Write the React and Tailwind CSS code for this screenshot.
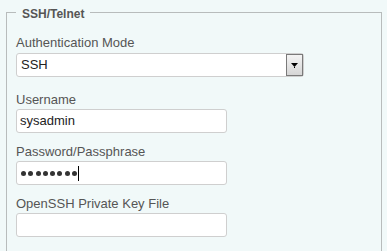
import { useState } from "react";

function Label({ children }) {
  return <div className="h-[16px] leading-[16px] text-[13px] text-[#555]">{children}</div>;
}

function TextBox({ children }) {
  return (
    <div className="mt-[1px] flex h-[24px] w-[211px] items-center rounded-[3px] border border-[#cfcfcf] bg-white pl-[3px] text-[13px] text-[#222]">
      {children}
    </div>
  );
}

export default function App() {
  const [mode] = useState("SSH");
  const dots = Array.from({ length: 8 });

  return (
    <div className="h-[251px] w-full overflow-hidden bg-[#f1f9f9] pt-[3px]" style={{ fontFamily: '"Liberation Sans", Arial, sans-serif' }}>
      <fieldset className="ml-[6px] h-[300px] w-[376px] border border-[#b8bcbc] pl-[9px] pt-[13px]">
        <legend className="px-[6px] pt-[3px] text-[12px] font-bold leading-[16px] text-[#555]">SSH/Telnet</legend>

        <Label>Authentication Mode</Label>
        <div className="mt-[2px] flex h-[24px] w-[288px] items-center justify-between rounded-[3px] border border-[#cfcfcf] bg-white pl-[4px] text-[13px] text-[#222]">
          <span>{mode}</span>
          <div className="flex h-[22px] w-[17px] items-center justify-center border border-[#7a7a7a] bg-gradient-to-b from-[#f4f4f4] to-[#d6d6d6]">
            <svg width="7" height="5" viewBox="0 0 7 5">
              <polygon points="0,0 7,0 3.5,4" fill="#000" />
              <rect x="3" y="4" width="1" height="1" fill="#000" />
            </svg>
          </div>
        </div>

        <div className="mt-[15px]">
          <Label>Username</Label>
          <TextBox>sysadmin</TextBox>
        </div>

        <div className="mt-[11px]">
          <Label>Password/Passphrase</Label>
          <TextBox>
            <div className="flex items-center gap-[2.3px] pl-[1px]">
              {dots.map((_, i) => (
                <span key={i} className="h-[5px] w-[5px] rounded-full bg-[#333]" />
              ))}
            </div>
            <span className="ml-[1px] h-[15px] w-[1px] bg-black" />
          </TextBox>
        </div>

        <div className="mt-[11px]">
          <Label>OpenSSH Private Key File</Label>
          <TextBox />
        </div>
      </fieldset>
    </div>
  );
}
